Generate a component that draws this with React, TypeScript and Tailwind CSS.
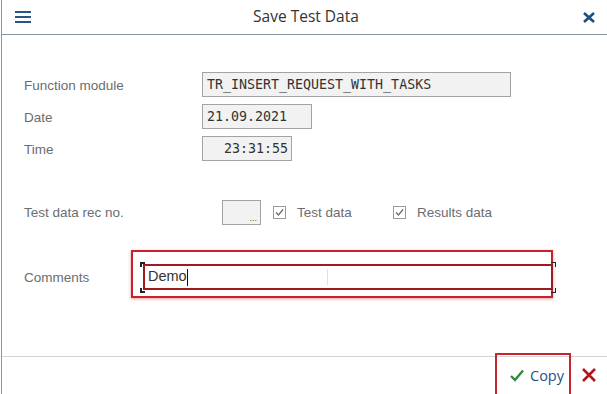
import React from "react";

const labelCls = "text-[13.5px] text-[#6a6d70] font-['Liberation_Sans',Arial,sans-serif]";
const inputCls =
  "h-[25px] bg-[#f2f2f2] border border-[#a3a3a3] flex items-center font-['DejaVu_Sans_Mono',monospace] text-[13.3px] text-[#333]";

function CheckBox() {
  return (
    <div className="w-[13px] h-[13px] border border-[#9a9a9a] bg-white flex items-center justify-center">
      <svg width="9" height="9" viewBox="0 0 9 9">
        <polyline points="1,4.5 3.5,7 8,1.5" fill="none" stroke="#6b6b6b" strokeWidth="1.3" />
      </svg>
    </div>
  );
}

function Corner({ pos }: { pos: string }) {
  return <div className={`absolute w-[5px] h-[5px] border-[#222] ${pos}`} />;
}

export default function App() {
  return (
    <div className="w-[607px] h-[394px] overflow-hidden bg-white flex font-['Liberation_Sans',Arial,sans-serif]">
      <div className="ml-px flex-1 border-l border-[#8996a3] flex flex-col">
        {/* header */}
        <div className="h-[35px] shrink-0 border-b border-[#8c96a0] grid grid-cols-[1fr_auto_1fr] items-center pl-[13px] pr-[12px]">
          <div className="flex flex-col gap-[3px] w-[16px]">
            <span className="block h-[2px] bg-[#2a5583]" />
            <span className="block h-[2px] bg-[#2a5583]" />
            <span className="block h-[2px] bg-[#2a5583]" />
          </div>
          <div className="text-[15.5px] text-[#333] font-['Open_Sans',sans-serif] pl-[2px]">Save Test Data</div>
          <div className="flex justify-end">
            <svg width="12" height="11" viewBox="0 0 12 11">
              <path d="M1 1 L11 10 M11 1 L1 10" stroke="#1b4f82" strokeWidth="2.6" strokeLinecap="butt" />
            </svg>
          </div>
        </div>

        {/* form */}
        <div className="flex-1 flex flex-col pl-[22px]">
          <div className="mt-[37px] flex items-center">
            <div className={`${labelCls} w-[178px] pt-[3px]`}>Function module</div>
            <div className={`${inputCls} w-[309px] pl-[4px]`}>TR_INSERT_REQUEST_WITH_TASKS</div>
          </div>
          <div className="mt-[7px] flex items-center">
            <div className={`${labelCls} w-[178px] pt-[3px]`}>Date</div>
            <div className={`${inputCls} w-[110px] pl-[4px]`}>21.09.2021</div>
          </div>
          <div className="mt-[7px] flex items-center">
            <div className={`${labelCls} w-[178px] pt-[3px]`}>Time</div>
            <div className={`${inputCls} w-[90px] justify-end pr-[3px]`}>23:31:55</div>
          </div>

          <div className="mt-[39px] flex items-center">
            <div className={`${labelCls} w-[198px] pt-[2px]`}>Test data rec no.</div>
            <div className="relative w-[39px] h-[25px] bg-[#f2f2f2] border border-[#a3a3a3]">
              <span className="absolute right-[3px] bottom-[1px] text-[9px] leading-none text-[#555]">...</span>
            </div>
            <div className="ml-[12px] w-[120px] flex items-center gap-[11px]">
              <CheckBox />
              <span className={`${labelCls} pt-[1px]`}>Test data</span>
            </div>
            <div className="flex items-center gap-[11px]">
              <CheckBox />
              <span className={`${labelCls} pt-[1px]`}>Results data</span>
            </div>
          </div>

          <div className="mt-[25px] flex items-center">
            <div className={`${labelCls} w-[107px] pt-[8px]`}>Comments</div>
            <div className="w-[422px] h-[48px] border-2 border-[#c8202f] shadow-[0_1px_3px_rgba(190,30,40,0.45)] pl-[8px] pr-[2px] pt-[12px]">
              <div className="relative w-[410px] h-[26px] ml-[2px]">
                <Corner pos="-left-[3px] -top-[2px] border-l-2 border-t-2" />
                <Corner pos="-left-[3px] -bottom-[3px] border-l-2 border-b-2" />
                <Corner pos="-right-[3px] -top-[2px] border-r border-t" />
                <Corner pos="-right-[3px] -bottom-[3px] border-r border-b" />
                <div className="w-full h-full border-2 border-[#9d1a22] bg-white flex items-center pl-[3px] text-[14.5px] text-[#333]">
                  <span>Demo</span>
                  <span className="inline-block w-px h-[17px] bg-[#111]" />
                  <span className="ml-[139px] inline-block w-px h-[16px] bg-[#e0e0e0]" />
                </div>
              </div>
            </div>
          </div>
        </div>

        {/* footer */}
        <div className="h-[38px] shrink-0 border-t border-[#d4d4d4] flex justify-end items-start pr-[11px]">
          <div className="-mt-[4px] w-[76px] h-[45px] border-2 border-[#c4262e] flex items-center pl-[13px] gap-[6px]">
            <svg width="14" height="13" viewBox="0 0 14 13">
              <polyline points="1,7 5,11 13,1.5" fill="none" stroke="#2f8a3c" strokeWidth="2.4" />
            </svg>
            <span className="text-[14.5px] text-[#1f4f85] font-['Open_Sans',sans-serif]">Copy</span>
          </div>
          <div className="ml-[11px] mt-[11px]">
            <svg width="14" height="14" viewBox="0 0 14 14">
              <path d="M1 1 L13 13 M13 1 L1 13" stroke="#b0161c" strokeWidth="2.6" />
            </svg>
          </div>
        </div>
      </div>
    </div>
  );
}
